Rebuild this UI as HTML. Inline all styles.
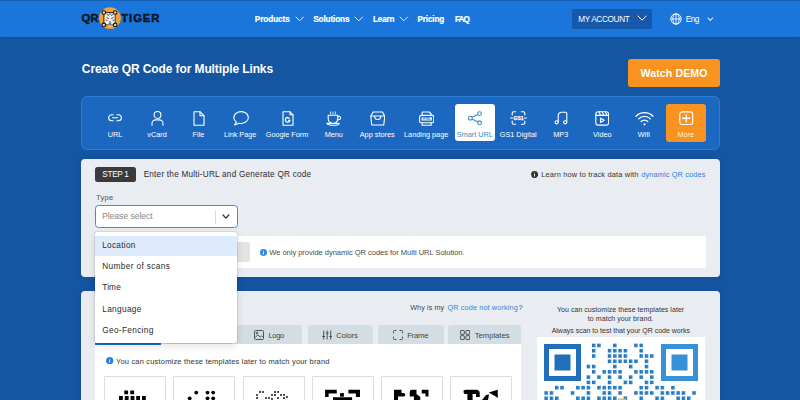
<!DOCTYPE html>
<html><head><meta charset="utf-8">
<style>
*{margin:0;padding:0;box-sizing:border-box}
html,body{width:800px;height:400px;overflow:hidden}
body{background:#1556a2;font-family:"Liberation Sans",sans-serif;position:relative;color:#222}
.a{position:absolute}
.t{position:absolute;white-space:nowrap;line-height:1}
.lbl{font-size:7.3px;color:#fff}
</style></head>
<body>
<div class="a" style="left:0;top:0;width:800px;height:37px;background:#1b76db;box-shadow:0 1px 1.5px rgba(0,0,0,.07)"></div>
<div class="a" style="left:0;top:0;width:800px;height:1px;background:#1860b3"></div>
<!-- logo -->
<div class="t" style="left:81.4px;top:13.4px;font-size:11.3px;font-weight:bold;color:#0b1626;letter-spacing:0.2px;-webkit-text-stroke:0.55px #0b1626">QR</div>
<svg class="a" style="left:98px;top:6px" width="24" height="24" viewBox="0 0 24 24">
 <circle cx="12" cy="12.1" r="10.9" fill="#f5a033"/>
 <path d="M6.8 9 Q12 4.5 17.2 9 L17.6 15.5 Q15.5 20.5 12 20.5 Q8.5 20.5 6.4 15.5z" fill="#eeeef0"/>
 <path d="M8.5 11.5l2.2 1.2M15.5 11.5l-2.2 1.2M10.8 17.2h2.4M12 6.5v2.5M9.5 8l1 2M14.5 8l-1 2M7.5 14l1.8 0.5M16.5 14l-1.8 0.5" stroke="#333" stroke-width="0.9" fill="none"/>
 <path d="M11 15.5h2l-1 1.2z" fill="#222"/>
 <path d="M5.8 6.5h11.4v12.4H5.8z" fill="none" stroke="#111" stroke-width="0.8"/>
 <g fill="#d8d8d8" stroke="#111" stroke-width="1.1"><circle cx="5.8" cy="6.5" r="1.8"/><circle cx="17.2" cy="6.5" r="1.8"/><circle cx="5.8" cy="18.9" r="1.8"/><circle cx="17.2" cy="18.9" r="1.8"/></g>
</svg>
<div class="t" style="left:121.3px;top:13.4px;font-size:11.3px;font-weight:bold;color:#0b1626;letter-spacing:0.9px;-webkit-text-stroke:0.55px #0b1626">TIGER</div>

<svg class="a" style="left:295.80px;top:17.40px;overflow:visible" width="7.40" height="3.80" viewBox="0 0 7.40 3.80"><polyline points="0,0 3.70,3.80 7.40,0" fill="none" stroke="#fff" stroke-width="0.90" stroke-linecap="round" stroke-linejoin="round"/></svg>
<svg class="a" style="left:355.40px;top:17.40px;overflow:visible" width="7.60" height="3.80" viewBox="0 0 7.60 3.80"><polyline points="0,0 3.80,3.80 7.60,0" fill="none" stroke="#fff" stroke-width="0.90" stroke-linecap="round" stroke-linejoin="round"/></svg>
<svg class="a" style="left:400.40px;top:17.40px;overflow:visible" width="7.60" height="3.80" viewBox="0 0 7.60 3.80"><polyline points="0,0 3.80,3.80 7.60,0" fill="none" stroke="#fff" stroke-width="0.90" stroke-linecap="round" stroke-linejoin="round"/></svg>
<div class="a" style="left:571.6px;top:9px;width:80.4px;height:19.6px;background:#1659ab;border-radius:2px"></div>
<svg class="a" style="left:637.60px;top:16.30px;overflow:visible" width="8.20" height="4.20" viewBox="0 0 8.20 4.20"><polyline points="0,0 4.10,4.20 8.20,0" fill="none" stroke="#fff" stroke-width="1.00" stroke-linecap="round" stroke-linejoin="round"/></svg>
<svg class="a" style="left:669.5px;top:12.7px" width="12" height="12" viewBox="0 0 12 12"><g fill="none" stroke="#fff" stroke-width="0.9"><circle cx="6" cy="6" r="5.2"/><ellipse cx="6" cy="6" rx="3.2" ry="5.2"/><path d="M6 0.8v10.4M0.8 6h10.4"/></g></svg>
<svg class="a" style="left:708.30px;top:17.80px;overflow:visible" width="4.60" height="2.50" viewBox="0 0 4.60 2.50"><polyline points="0,0 2.30,2.50 4.60,0" fill="none" stroke="#fff" stroke-width="1.10" stroke-linecap="round" stroke-linejoin="round"/></svg>

<div class="a" style="left:628.1px;top:58.8px;width:91.5px;height:28.1px;background:#f7931e;border-radius:3px"></div>

<div class="a" style="left:81px;top:96px;width:639px;height:53.5px;background:#1c68c0;border:1px solid #2e7dd4;border-radius:6px"></div>
<!--ICONS-->
<div class="a" style="left:454.5px;top:104px;width:40.7px;height:37.4px;background:#fff;border-radius:3px"></div>
<div class="a" style="left:666px;top:104px;width:39.6px;height:38px;background:#f7931e;border-radius:3px"></div>
<svg class="a" style="left:108px;top:114px" width="14" height="7.5" viewBox="0 0 14 7.5"><path d="M5.2 0.8H3.6a2.95 2.95 0 0 0 0 5.9H5.2M8.8 0.8h1.6a2.95 2.95 0 0 1 0 5.9H8.8M4.5 3.75h5" stroke="#fff" fill="none" stroke-width="1.1" stroke-linecap="round" stroke-linejoin="round"/></svg>
<div class="t lbl" style="left:115.0px;top:130.7px;width:60px;margin-left:-30px;text-align:center;color:#fff">URL</div>
<svg class="a" style="left:150.5px;top:110.5px" width="13" height="15" viewBox="0 0 13 15"><circle cx="6.5" cy="3.9" r="3.4" stroke="#fff" fill="none" stroke-width="1.1" stroke-linecap="round" stroke-linejoin="round"/><path d="M1 14.3v-1.6a3.8 3.8 0 0 1 3.8-3.8h3.4a3.8 3.8 0 0 1 3.8 3.8v1.6" stroke="#fff" fill="none" stroke-width="1.1" stroke-linecap="round" stroke-linejoin="round"/></svg>
<div class="t lbl" style="left:157.0px;top:130.7px;width:60px;margin-left:-30px;text-align:center;color:#fff">vCard</div>
<svg class="a" style="left:192.5px;top:110.5px" width="12" height="15" viewBox="0 0 12 15"><path d="M1 0.8h6.2L11 4.6v9.6H1z" stroke="#fff" fill="none" stroke-width="1.1" stroke-linecap="round" stroke-linejoin="round"/><path d="M7 0.8v3.8h4" stroke="#fff" fill="none" stroke-width="1.1" stroke-linecap="round" stroke-linejoin="round"/></svg>
<div class="t lbl" style="left:198.5px;top:130.7px;width:60px;margin-left:-30px;text-align:center;color:#fff">File</div>
<svg class="a" style="left:231.5px;top:110.5px" width="18" height="15" viewBox="0 0 18 15"><path d="M4.4 11A7.2 5.9 0 1 1 7.1 12.2L2.6 13.9z" stroke="#fff" fill="none" stroke-width="1.1" stroke-linecap="round" stroke-linejoin="round"/></svg>
<div class="t lbl" style="left:240.2px;top:130.7px;width:60px;margin-left:-30px;text-align:center;color:#fff">Link Page</div>
<svg class="a" style="left:281.5px;top:110.5px" width="12" height="15" viewBox="0 0 12 15"><path d="M1 0.8h7L11 3.8v10.4H1z" stroke="#fff" fill="none" stroke-width="1.1" stroke-linecap="round" stroke-linejoin="round"/><path d="M8 0.8v3h3" stroke="#fff" fill="none" stroke-width="1.1" stroke-linecap="round" stroke-linejoin="round"/><path d="M7.6 7.6A2.3 2.3 0 1 0 7.9 9.3H6.2" stroke="#fff" fill="none" stroke-width="1.3"/></svg>
<div class="t lbl" style="left:287.0px;top:130.7px;width:60px;margin-left:-30px;text-align:center;color:#fff">Google Form</div>
<svg class="a" style="left:325.5px;top:110.5px" width="16" height="15" viewBox="0 0 16 15"><path d="M4.6 0.9v2.2M7 0.9v2.2M9.4 0.9v2.2" stroke="#fff" fill="none" stroke-width="0.8" stroke-linecap="round"/><path d="M2.2 4.2h9.6v3.6a4.8 4.8 0 0 1-9.6 0z" stroke="#fff" fill="none" stroke-width="1.1" stroke-linecap="round" stroke-linejoin="round"/><path d="M11.8 5.2h1a1.8 1.8 0 0 1 0 3.6h-1.4" stroke="#fff" fill="none" stroke-width="1.1" stroke-linecap="round" stroke-linejoin="round"/><path d="M1 12.4h12.2a6.1 1.8 0 0 1-12.2 0z" stroke="#fff" fill="none" stroke-width="1.1" stroke-linecap="round" stroke-linejoin="round"/></svg>
<div class="t lbl" style="left:333.8px;top:130.7px;width:60px;margin-left:-30px;text-align:center;color:#fff">Menu</div>
<svg class="a" style="left:369.5px;top:110.5px" width="15.5" height="15" viewBox="0 0 15.5 15"><path d="M3 1h9.5l2.2 4.2L13.8 14H1.7L0.8 5.2z" stroke="#fff" fill="none" stroke-width="1.1" stroke-linecap="round" stroke-linejoin="round"/><path d="M1 5h13.5" stroke="#fff" fill="none" stroke-width="1.1" stroke-linecap="round" stroke-linejoin="round"/><path d="M4.7 5.4a3.05 3.05 0 0 0 6.1 0" stroke="#fff" fill="none" stroke-width="1.1" stroke-linecap="round" stroke-linejoin="round"/></svg>
<div class="t lbl" style="left:377.2px;top:130.7px;width:60px;margin-left:-30px;text-align:center;color:#fff">App stores</div>
<svg class="a" style="left:418.5px;top:110.5px" width="15.5" height="15" viewBox="0 0 15.5 15"><path d="M3.2 4.2V1h7l2 2v1.2" stroke="#fff" fill="none" stroke-width="1.1" stroke-linecap="round" stroke-linejoin="round"/><path d="M2.2 4.4h11a1.6 1.6 0 0 1 1.6 1.6v4.2a1.6 1.6 0 0 1-1.6 1.6h-11A1.6 1.6 0 0 1 0.6 10.2V6a1.6 1.6 0 0 1 1.6-1.6z" stroke="#fff" fill="none" stroke-width="1.1" stroke-linecap="round" stroke-linejoin="round"/><path d="M3.2 11.8v2.5h9v-2.5" stroke="#fff" fill="none" stroke-width="1.1" stroke-linecap="round" stroke-linejoin="round"/><rect x="2.6" y="6.3" width="10.3" height="3.2" fill="#fff"/><text x="7.75" y="8.9" font-size="2.8" font-weight="bold" text-anchor="middle" fill="#1c68c0" font-family="Liberation Sans">HTML</text></svg>
<div class="t lbl" style="left:426.2px;top:130.7px;width:60px;margin-left:-30px;text-align:center;color:#fff">Landing page</div>
<svg class="a" style="left:467px;top:110.5px" width="15" height="15" viewBox="0 0 15 15"><circle cx="12.5" cy="2.6" r="1.9" stroke="#3a8fbf" fill="none" stroke-width="1.1"/><circle cx="3.3" cy="7.2" r="1.9" stroke="#3a8fbf" fill="none" stroke-width="1.1"/><circle cx="12.5" cy="11.8" r="1.9" stroke="#3a8fbf" fill="none" stroke-width="1.1"/><path d="M5 6.3l5.8-2.8M5 8.1l5.8 2.8" stroke="#3a8fbf" fill="none" stroke-width="1.1"/></svg>
<div class="t lbl" style="left:474.9px;top:130.7px;width:60px;margin-left:-30px;text-align:center;color:#3a8fbf">Smart URL</div>
<svg class="a" style="left:510px;top:110.8px" width="17" height="14" viewBox="0 0 17 14"><path d="M2.2 4V2.2a1.4 1.4 0 0 1 1.4-1.4H5.6M11.4 0.8h2a1.4 1.4 0 0 1 1.4 1.4V4M14.8 10v1.8a1.4 1.4 0 0 1-1.4 1.4h-2M5.6 13.2h-2a1.4 1.4 0 0 1-1.4-1.4V10M0.6 7h2M14.4 7h2" stroke="#fff" fill="none" stroke-width="1.1" stroke-linecap="round" stroke-linejoin="round"/><text x="8.5" y="8.7" font-size="4.9" font-weight="bold" text-anchor="middle" fill="#fff" stroke="#fff" stroke-width="0.25" font-family="Liberation Sans">GS1</text></svg>
<div class="t lbl" style="left:518.2px;top:130.7px;width:60px;margin-left:-30px;text-align:center;color:#fff">GS1 Digital</div>
<svg class="a" style="left:553.5px;top:110.8px" width="14.5" height="14" viewBox="0 0 14.5 14"><path d="M4.2 11V4.6a3.4 3.4 0 0 1 3.4-3.4h4a1.2 1.2 0 0 1 1.2 1.2V11" stroke="#fff" fill="none" stroke-width="1.1" stroke-linecap="round" stroke-linejoin="round"/><circle cx="2.6" cy="11.3" r="1.6" stroke="#fff" fill="none" stroke-width="1.1" stroke-linecap="round" stroke-linejoin="round"/><circle cx="11.2" cy="11.3" r="1.6" stroke="#fff" fill="none" stroke-width="1.1" stroke-linecap="round" stroke-linejoin="round"/></svg>
<div class="t lbl" style="left:560.8px;top:130.7px;width:60px;margin-left:-30px;text-align:center;color:#fff">MP3</div>
<svg class="a" style="left:594.5px;top:110.5px" width="14.5" height="15" viewBox="0 0 14.5 15"><rect x="0.8" y="0.8" width="12.8" height="13.3" rx="2.4" stroke="#fff" fill="none" stroke-width="1.1" stroke-linecap="round" stroke-linejoin="round"/><path d="M0.8 4.4h12.8M4 0.9l1.6 3.4M7.2 0.9l1.6 3.4M10.4 0.9l1.6 3.4" stroke="#fff" fill="none" stroke-width="1.1" stroke-linecap="round" stroke-linejoin="round"/><path d="M5.6 7.2v4.2l3.6-2.1z" stroke="#fff" fill="none" stroke-width="1.1" stroke-linecap="round" stroke-linejoin="round"/></svg>
<div class="t lbl" style="left:602.3px;top:130.7px;width:60px;margin-left:-30px;text-align:center;color:#fff">Video</div>
<svg class="a" style="left:634.5px;top:110.5px" width="19" height="15" viewBox="0 0 19 15"><path d="M1 5.2a12 12 0 0 1 17 0M3.6 7.9a8.3 8.3 0 0 1 11.8 0M6.2 10.5a4.6 4.6 0 0 1 6.6 0" stroke="#fff" fill="none" stroke-width="1.3" stroke-linecap="round"/><circle cx="9.5" cy="13.3" r="1.1" fill="#fff"/></svg>
<div class="t lbl" style="left:643.8px;top:130.7px;width:60px;margin-left:-30px;text-align:center;color:#fff">Wifi</div>
<svg class="a" style="left:679px;top:110.5px" width="14.5" height="14.5" viewBox="0 0 14.5 14.5"><rect x="0.8" y="0.8" width="12.9" height="12.9" rx="2.6" stroke="#fff" fill="none" stroke-width="1.2"/><path d="M7.25 3.6v7.3M3.6 7.25h7.3" stroke="#fff" fill="none" stroke-width="1.3" stroke-linecap="round"/></svg>
<div class="t lbl" style="left:685.8px;top:130.7px;width:60px;margin-left:-30px;text-align:center;color:#fff1de">More</div>
<!--/ICONS-->

<!-- step panel -->
<div class="a" style="left:81px;top:158.5px;width:638.8px;height:118.2px;background:#e9edf1;border-radius:4px;box-shadow:0 1px 10px rgba(0,0,0,.10)"></div>
<div class="a" style="left:95.1px;top:167.1px;width:41.4px;height:14.5px;background:#3b3b3b;border-radius:2.5px"></div>
<svg class="a" style="left:530.9px;top:170.8px" width="7.2" height="7.2" viewBox="0 0 7.2 7.2"><circle cx="3.6" cy="3.6" r="3.5" fill="#333"/><rect x="3.15" y="3" width="0.9" height="2.6" fill="#fff"/><circle cx="3.6" cy="2" r="0.5" fill="#fff"/></svg>
<div class="a" style="left:94.7px;top:205.3px;width:143px;height:22.4px;background:#fff;border:1.2px solid #3f89e3;border-radius:3.5px"></div>
<div class="a" style="left:215px;top:209.5px;width:0.9px;height:14px;background:#d9d9d9"></div>
<svg class="a" style="left:223.30px;top:215.10px;overflow:visible" width="5.80" height="3.10" viewBox="0 0 5.80 3.10"><polyline points="0,0 2.90,3.10 5.80,0" fill="none" stroke="#333" stroke-width="1.30" stroke-linecap="round" stroke-linejoin="round"/></svg>
<div class="a" style="left:95px;top:236.3px;width:611.3px;height:31.5px;background:#fff;border-radius:1px"></div>
<div class="a" style="left:200px;top:242px;width:50.3px;height:20px;background:#e4e4e4;border-radius:3px"></div>
<svg class="a" style="left:259.9px;top:249px" width="7" height="7" viewBox="0 0 7 7"><circle cx="3.5" cy="3.5" r="3.45" fill="#2d89e5"/><rect x="3.05" y="2.9" width="0.9" height="2.6" fill="#fff"/><circle cx="3.5" cy="1.9" r="0.5" fill="#fff"/></svg>

<!-- lower panel -->
<div class="a" style="left:81px;top:291px;width:638.5px;height:130px;background:#e9edf1;border-radius:4px;box-shadow:0 1px 10px rgba(0,0,0,.10)"></div>
<div class="a" style="left:95px;top:325.3px;width:66px;height:19px;background:#fff;border-radius:3px 3px 0 0"></div>
<div class="a" style="left:166px;top:325.3px;width:66px;height:19px;background:#d3dde4;border-radius:3px 3px 0 0"></div>
<div class="a" style="left:237px;top:325.3px;width:64.7px;height:19px;background:#d3dde4;border-radius:3px 3px 0 0"></div>
<div class="a" style="left:307.5px;top:325.3px;width:65.3px;height:19px;background:#d3dde4;border-radius:3px 3px 0 0"></div>
<div class="a" style="left:377.8px;top:325.3px;width:66.2px;height:19px;background:#d3dde4;border-radius:3px 3px 0 0"></div>
<div class="a" style="left:448.1px;top:325.3px;width:73.2px;height:19px;background:#d3dde4;border-radius:3px 3px 0 0"></div>
<div class="a" style="left:95px;top:344.1px;width:426.3px;height:60px;background:#fff"></div>
<div class="a" style="left:95px;top:343px;width:66px;height:2px;background:#1a6fc9"></div>
<svg class="a" style="left:253.8px;top:330px" width="10" height="10" viewBox="0 0 10 10"><g fill="none" stroke="#444" stroke-width="0.9"><rect x="0.5" y="0.5" width="9" height="9" rx="1"/><path d="M0.8 7.8l3-3 2.4 2.4 1.4-1.4 2 2"/><circle cx="3" cy="3" r="0.9"/></g></svg>
<svg class="a" style="left:321.8px;top:330px" width="10.4" height="10" viewBox="0 0 10.4 10"><g fill="none" stroke="#444" stroke-width="0.9"><path d="M1.7 0.5v9M5.2 0.5v9M8.7 0.5v9M0.2 6.5h3M3.7 3h3M7.2 6.5h3"/></g></svg>
<svg class="a" style="left:392.6px;top:330.2px" width="10" height="10" viewBox="0 0 10 10"><g fill="none" stroke="#444" stroke-width="0.9" stroke-linecap="round"><path d="M0.5 3V1.5a1 1 0 0 1 1-1H3M7 0.5h1.5a1 1 0 0 1 1 1V3M9.5 7v1.5a1 1 0 0 1-1 1H7M3 9.5H1.5a1 1 0 0 1-1-1V7"/></g></svg>
<svg class="a" style="left:459.6px;top:330.2px" width="10.2" height="10" viewBox="0 0 10.2 10"><g fill="none" stroke="#444" stroke-width="0.9"><rect x="0.5" y="0.5" width="3.8" height="3.8" rx="0.5"/><rect x="5.9" y="0.5" width="3.8" height="3.8" rx="0.5"/><rect x="0.5" y="5.7" width="3.8" height="3.8" rx="0.5"/><rect x="5.9" y="5.7" width="3.8" height="3.8" rx="0.5"/></g></svg>
<svg class="a" style="left:106.2px;top:357.1px" width="7.4" height="7.4" viewBox="0 0 7.4 7.4"><circle cx="3.7" cy="3.7" r="3.6" fill="#2a7de0"/><rect x="3.25" y="3.1" width="0.9" height="2.6" fill="#fff"/><circle cx="3.7" cy="2.1" r="0.5" fill="#fff"/></svg>
<div class="a" style="left:104.20px;top:376.2px;width:62px;height:40px;background:#fff;border:1px solid #dcdcdc;border-radius:1px"></div><div class="a" style="left:173.45px;top:376.2px;width:62px;height:40px;background:#fff;border:1px solid #dcdcdc;border-radius:1px"></div><div class="a" style="left:242.70px;top:376.2px;width:62px;height:40px;background:#fff;border:1px solid #dcdcdc;border-radius:1px"></div><div class="a" style="left:311.95px;top:376.2px;width:62px;height:40px;background:#fff;border:1px solid #dcdcdc;border-radius:1px"></div><div class="a" style="left:381.20px;top:376.2px;width:62px;height:40px;background:#fff;border:1px solid #dcdcdc;border-radius:1px"></div><div class="a" style="left:450.45px;top:376.2px;width:62px;height:40px;background:#fff;border:1px solid #dcdcdc;border-radius:1px"></div>

<svg class="a" style="left:104px;top:376px" width="420" height="24" viewBox="0 0 420 24">
 <g fill="#000">
  <rect x="20.3" y="14.5" width="3.8" height="3.8"/><rect x="26.3" y="14.5" width="3.8" height="3.8"/>
  <rect x="15" y="20" width="3.8" height="4"/><rect x="20.8" y="20" width="3.8" height="4"/><rect x="26.6" y="20" width="3.8" height="4"/><rect x="32.2" y="20" width="3.8" height="4"/><rect x="38" y="20" width="3.8" height="4"/>
  <circle cx="92.3" cy="16.6" r="1.9"/><circle cx="85.7" cy="22.3" r="1.9"/><circle cx="103.5" cy="16.6" r="1.9"/><circle cx="109.2" cy="16.6" r="1.9"/><circle cx="103.5" cy="22.3" r="1.9"/><circle cx="109.2" cy="22.3" r="1.9"/>
  <circle cx="156" cy="16" r="0.9"/><circle cx="159" cy="16" r="0.9"/><circle cx="153" cy="19" r="0.9"/><circle cx="153" cy="22" r="0.9"/><circle cx="171" cy="16" r="0.9"/><circle cx="174" cy="16" r="0.9"/><circle cx="168" cy="19" r="0.9"/><circle cx="171" cy="19" r="0.9"/><circle cx="177" cy="19" r="0.9"/><circle cx="180" cy="19" r="0.9"/><circle cx="183" cy="21" r="0.9"/><circle cx="165" cy="22" r="0.9"/><circle cx="174" cy="22" r="0.9"/><circle cx="180" cy="22" r="0.9"/><circle cx="162" cy="22" r="0.9"/><circle cx="168" cy="23" r="0.9"/>
  <path d="M221.1 13.75h11.65v3.75h-8.15v3.4h-3.5z"/><path d="M244.4 13.75h11.6v7.15h-4.1v-3.4h-7.5z"/><rect x="236.1" y="17.1" width="3.8" height="3.6"/><rect x="229" y="21.25" width="19.1" height="3"/>
  <path d="M290 13.75h7.5v3.25h2a1.75 1.75 0 0 1 0 3.5h-5.5v3.5h-4z"/><path d="M308 13.75h4.5v6.75h-6.75v-4.5a2.25 2.25 0 0 1 2.25-2.25z"/><path d="M310 20.5l2.5-2.5l3.75 3v3h-6.3z"/><path d="M317.75 13.75h6.75v6.75h-3v-3h-3.75z"/>
  <path d="M359.6 14.6q1-0.85 2.5-0.85h10a3.6 3.6 0 0 1 3.65 3.6v3.65h-3.75v-3h-3.4v6h-5.2v-6h-2.3q-1 0-1.5-1.5z"/><path d="M384.75 16.5l9-2.75v8.25l-2-1.5z"/><path d="M378 24l4-5l3-0.5l-1 5.5z"/>
 </g>
</svg>
<svg class="a" style="left:537px;top:337px" width="168" height="63" viewBox="0 0 168 63"><defs><linearGradient id="qg" x1="0" x2="1" y1="0" y2="0"><stop offset="0" stop-color="#1d6db5"/><stop offset="1" stop-color="#3a93d8"/></linearGradient></defs><rect width="168" height="63" fill="#fff"/><g fill="url(#qg)"><rect x="54.97" y="6.65" width="3.6" height="3.6"/><rect x="60.25" y="6.65" width="3.6" height="3.6"/><rect x="76.09" y="6.65" width="3.6" height="3.6"/><rect x="97.21" y="6.65" width="3.6" height="3.6"/><rect x="102.49" y="6.65" width="3.6" height="3.6"/><rect x="54.97" y="11.93" width="3.6" height="3.6"/><rect x="70.81" y="11.93" width="3.6" height="3.6"/><rect x="76.09" y="11.93" width="3.6" height="3.6"/><rect x="81.37" y="11.93" width="3.6" height="3.6"/><rect x="86.65" y="11.93" width="3.6" height="3.6"/><rect x="102.49" y="11.93" width="3.6" height="3.6"/><rect x="54.97" y="17.21" width="3.6" height="3.6"/><rect x="70.81" y="17.21" width="3.6" height="3.6"/><rect x="76.09" y="17.21" width="3.6" height="3.6"/><rect x="81.37" y="17.21" width="3.6" height="3.6"/><rect x="86.65" y="17.21" width="3.6" height="3.6"/><rect x="102.49" y="17.21" width="3.6" height="3.6"/><rect x="107.77" y="17.21" width="3.6" height="3.6"/><rect x="113.05" y="17.21" width="3.6" height="3.6"/><rect x="70.81" y="22.49" width="3.6" height="3.6"/><rect x="76.09" y="22.49" width="3.6" height="3.6"/><rect x="81.37" y="22.49" width="3.6" height="3.6"/><rect x="86.65" y="22.49" width="3.6" height="3.6"/><rect x="91.93" y="22.49" width="3.6" height="3.6"/><rect x="97.21" y="22.49" width="3.6" height="3.6"/><rect x="107.77" y="22.49" width="3.6" height="3.6"/><rect x="49.69" y="27.77" width="3.6" height="3.6"/><rect x="54.97" y="27.77" width="3.6" height="3.6"/><rect x="76.09" y="27.77" width="3.6" height="3.6"/><rect x="91.93" y="27.77" width="3.6" height="3.6"/><rect x="107.77" y="27.77" width="3.6" height="3.6"/><rect x="54.97" y="33.05" width="3.6" height="3.6"/><rect x="65.53" y="33.05" width="3.6" height="3.6"/><rect x="70.81" y="33.05" width="3.6" height="3.6"/><rect x="76.09" y="33.05" width="3.6" height="3.6"/><rect x="81.37" y="33.05" width="3.6" height="3.6"/><rect x="97.21" y="33.05" width="3.6" height="3.6"/><rect x="102.49" y="33.05" width="3.6" height="3.6"/><rect x="107.77" y="33.05" width="3.6" height="3.6"/><rect x="113.05" y="33.05" width="3.6" height="3.6"/><rect x="49.69" y="38.33" width="3.6" height="3.6"/><rect x="60.25" y="38.33" width="3.6" height="3.6"/><rect x="70.81" y="38.33" width="3.6" height="3.6"/><rect x="81.37" y="38.33" width="3.6" height="3.6"/><rect x="91.93" y="38.33" width="3.6" height="3.6"/><rect x="102.49" y="38.33" width="3.6" height="3.6"/><rect x="113.05" y="38.33" width="3.6" height="3.6"/><rect x="49.69" y="43.61" width="3.6" height="3.6"/><rect x="54.97" y="43.61" width="3.6" height="3.6"/><rect x="70.81" y="43.61" width="3.6" height="3.6"/><rect x="86.65" y="43.61" width="3.6" height="3.6"/><rect x="91.93" y="43.61" width="3.6" height="3.6"/><rect x="107.77" y="43.61" width="3.6" height="3.6"/><rect x="113.05" y="43.61" width="3.6" height="3.6"/><rect x="18.01" y="48.89" width="3.6" height="3.6"/><rect x="23.29" y="48.89" width="3.6" height="3.6"/><rect x="39.13" y="48.89" width="3.6" height="3.6"/><rect x="44.41" y="48.89" width="3.6" height="3.6"/><rect x="49.69" y="48.89" width="3.6" height="3.6"/><rect x="60.25" y="48.89" width="3.6" height="3.6"/><rect x="65.53" y="48.89" width="3.6" height="3.6"/><rect x="70.81" y="48.89" width="3.6" height="3.6"/><rect x="76.09" y="48.89" width="3.6" height="3.6"/><rect x="81.37" y="48.89" width="3.6" height="3.6"/><rect x="102.49" y="48.89" width="3.6" height="3.6"/><rect x="107.77" y="48.89" width="3.6" height="3.6"/><rect x="118.33" y="48.89" width="3.6" height="3.6"/><rect x="123.61" y="48.89" width="3.6" height="3.6"/><rect x="134.17" y="48.89" width="3.6" height="3.6"/><rect x="7.45" y="54.17" width="3.6" height="3.6"/><rect x="12.73" y="54.17" width="3.6" height="3.6"/><rect x="33.85" y="54.17" width="3.6" height="3.6"/><rect x="49.69" y="54.17" width="3.6" height="3.6"/><rect x="65.53" y="54.17" width="3.6" height="3.6"/><rect x="70.81" y="54.17" width="3.6" height="3.6"/><rect x="81.37" y="54.17" width="3.6" height="3.6"/><rect x="97.21" y="54.17" width="3.6" height="3.6"/><rect x="102.49" y="54.17" width="3.6" height="3.6"/><rect x="107.77" y="54.17" width="3.6" height="3.6"/><rect x="113.05" y="54.17" width="3.6" height="3.6"/><rect x="123.61" y="54.17" width="3.6" height="3.6"/><rect x="128.89" y="54.17" width="3.6" height="3.6"/><rect x="134.17" y="54.17" width="3.6" height="3.6"/><rect x="139.45" y="54.17" width="3.6" height="3.6"/><rect x="144.73" y="54.17" width="3.6" height="3.6"/><rect x="155.29" y="54.17" width="3.6" height="3.6"/><rect x="7.45" y="59.45" width="3.6" height="3.6"/><rect x="12.73" y="59.45" width="3.6" height="3.6"/><rect x="18.01" y="59.45" width="3.6" height="3.6"/><rect x="39.13" y="59.45" width="3.6" height="3.6"/><rect x="44.41" y="59.45" width="3.6" height="3.6"/><rect x="49.69" y="59.45" width="3.6" height="3.6"/><rect x="60.25" y="59.45" width="3.6" height="3.6"/><rect x="65.53" y="59.45" width="3.6" height="3.6"/><rect x="70.81" y="59.45" width="3.6" height="3.6"/><rect x="76.09" y="59.45" width="3.6" height="3.6"/><rect x="86.65" y="59.45" width="3.6" height="3.6"/><rect x="102.49" y="59.45" width="3.6" height="3.6"/><rect x="118.33" y="59.45" width="3.6" height="3.6"/><rect x="123.61" y="59.45" width="3.6" height="3.6"/><rect x="139.45" y="59.45" width="3.6" height="3.6"/><rect x="144.73" y="59.45" width="3.6" height="3.6"/><rect x="150.01" y="59.45" width="3.6" height="3.6"/></g><rect x="7.00" y="7.00" width="37" height="37" fill="#1f70b8"/><rect x="12.00" y="12.00" width="27" height="27" fill="#fff"/><rect x="17.50" y="17.50" width="16" height="16" fill="#1f70b8"/><rect x="124.00" y="7.00" width="37" height="37" fill="#3891d6"/><rect x="129.00" y="12.00" width="27" height="27" fill="#fff"/><rect x="134.50" y="17.50" width="16" height="16" fill="#3891d6"/><rect x="81" y="61.5" width="8" height="2" fill="#f3b35c"/></svg>
<div class="t" style="left:254.75px;top:16.00px;font-size:8.20px;font-weight:bold;color:#fff;letter-spacing:-0.062px;-webkit-text-stroke:0.2px #fff">Products</div>
<div class="t" style="left:313.25px;top:16.00px;font-size:8.20px;font-weight:bold;color:#fff;letter-spacing:-0.130px;-webkit-text-stroke:0.2px #fff">Solutions</div>
<div class="t" style="left:373.05px;top:16.00px;font-size:8.20px;font-weight:bold;color:#fff;letter-spacing:-0.224px;-webkit-text-stroke:0.2px #fff">Learn</div>
<div class="t" style="left:417.45px;top:16.00px;font-size:8.20px;font-weight:bold;color:#fff;letter-spacing:-0.159px;-webkit-text-stroke:0.2px #fff">Pricing</div>
<div class="t" style="left:454.95px;top:16.00px;font-size:8.20px;font-weight:bold;color:#fff;letter-spacing:-0.981px;-webkit-text-stroke:0.2px #fff">FAQ</div>
<div class="t" style="left:578.25px;top:16.00px;font-size:8.20px;font-weight:normal;color:#fff;letter-spacing:-0.326px;">MY ACCOUNT</div>
<div class="t" style="left:685.65px;top:15.00px;font-size:8.30px;font-weight:normal;color:#fff;letter-spacing:-0.524px;">Eng</div>
<div class="t" style="left:81.85px;top:63.00px;font-size:12.00px;font-weight:bold;color:#fff;letter-spacing:-0.107px;">Create QR Code for Multiple Links</div>
<div class="t" style="left:640.50px;top:68.00px;font-size:10.60px;font-weight:bold;color:#fff;letter-spacing:0.098px;">Watch DEMO</div>
<div class="t" style="left:102.35px;top:171.00px;font-size:8.20px;font-weight:normal;color:#fff;letter-spacing:0.000px;letter-spacing:-0.3px;word-spacing:0px">STEP 1</div>
<div class="t" style="left:143.65px;top:171.00px;font-size:8.20px;font-weight:normal;color:#2b2b2b;letter-spacing:0.229px;">Enter the Multi-URL and Generate QR code</div>
<div class="t" style="left:541.25px;top:171.00px;font-size:7.40px;font-weight:normal;color:#333;letter-spacing:0.173px;">Learn how to track data with</div>
<div class="t" style="left:641.25px;top:171.00px;font-size:7.40px;font-weight:normal;color:#2a7fd4;letter-spacing:0.117px;">dynamic QR codes</div>
<div class="t" style="left:96.05px;top:194.00px;font-size:7.70px;font-weight:normal;color:#555;letter-spacing:0.203px;">Type</div>
<div class="t" style="left:102.05px;top:212.00px;font-size:8.70px;font-weight:normal;color:#888;letter-spacing:-0.088px;">Please select</div>
<div class="t" style="left:269.25px;top:249.00px;font-size:7.50px;font-weight:normal;color:#4a4a4a;letter-spacing:-0.011px;">We only provide dynamic QR codes for Multi URL Solution.</div>
<div class="t" style="left:410.25px;top:304.00px;font-size:7.20px;font-weight:normal;color:#444;letter-spacing:0.082px;">Why is my</div>
<div class="t" style="left:447.45px;top:304.00px;font-size:7.30px;font-weight:normal;color:#3a86d0;letter-spacing:0.118px;">QR code not working</div>
<div class="t" style="left:518.55px;top:304.00px;font-size:7.30px;font-weight:normal;color:#444;letter-spacing:0.000px;">?</div>
<div class="t" style="left:268.45px;top:332.00px;font-size:7.70px;font-weight:normal;color:#444;letter-spacing:-0.409px;">Logo</div>
<div class="t" style="left:336.35px;top:332.00px;font-size:7.70px;font-weight:normal;color:#444;letter-spacing:-0.134px;">Colors</div>
<div class="t" style="left:407.15px;top:332.00px;font-size:7.70px;font-weight:normal;color:#444;letter-spacing:-0.234px;">Frame</div>
<div class="t" style="left:474.65px;top:332.00px;font-size:7.70px;font-weight:normal;color:#444;letter-spacing:-0.011px;">Templates</div>
<div class="t" style="left:116.00px;top:358.00px;font-size:7.50px;font-weight:normal;color:#333;letter-spacing:0.177px;">You can customize these templates later to match your brand</div>
<div class="t" style="left:556.95px;top:306.00px;font-size:7.00px;font-weight:normal;color:#333;letter-spacing:0.048px;">You can customize these templates later</div>
<div class="t" style="left:587.85px;top:315.00px;font-size:7.00px;font-weight:normal;color:#333;letter-spacing:0.066px;">to match your brand.</div>
<div class="t" style="left:551.65px;top:327.00px;font-size:7.00px;font-weight:normal;color:#333;letter-spacing:-0.012px;">Always scan to test that your QR code works</div>

<!-- dropdown -->
<div class="a" style="left:94.8px;top:232px;width:142.6px;height:110.6px;background:#fff;border-radius:3px;box-shadow:0 0 0 1px rgba(0,0,0,.08),0 3px 8px rgba(0,0,0,.12)"></div>
<div class="a" style="left:94.8px;top:235.8px;width:142.6px;height:19.8px;background:#deebfd"></div>
<div class="t" style="left:102.25px;top:241.00px;font-size:8.30px;font-weight:normal;color:#2b2b2b;letter-spacing:0.249px;">Location</div>
<div class="t" style="left:102.25px;top:262.00px;font-size:8.30px;font-weight:normal;color:#2b2b2b;letter-spacing:0.353px;">Number of scans</div>
<div class="t" style="left:102.25px;top:283.00px;font-size:8.30px;font-weight:normal;color:#2b2b2b;letter-spacing:0.128px;">Time</div>
<div class="t" style="left:102.25px;top:305.00px;font-size:8.30px;font-weight:normal;color:#2b2b2b;letter-spacing:0.314px;">Language</div>
<div class="t" style="left:102.25px;top:326.00px;font-size:8.30px;font-weight:normal;color:#2b2b2b;letter-spacing:0.305px;">Geo-Fencing</div>
</body></html>
